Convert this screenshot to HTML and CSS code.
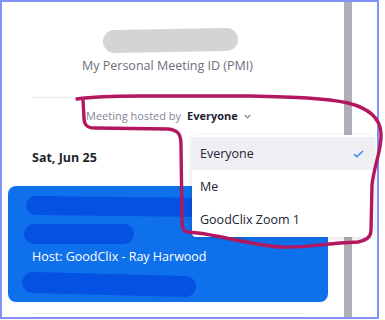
FILE: index.html
```html
<!DOCTYPE html>
<html lang="en">
  <head>
    <meta charset="utf-8" />
    <title>Meetings</title>
    <link rel="stylesheet" href="styles.css">
  </head>
  <body>
    <div id="frame">
      <div id="panel">
        <div class="blob"></div>
        <p class="pmi">My Personal Meeting ID (PMI)</p>
        <hr class="rule" />
        <div class="hosted">
          <span class="hosted-label">Meeting hosted by</span>
          <span class="hosted-value">Everyone</span>
          <svg class="chevron" width="7" height="5" viewBox="0 0 7 5"><polyline points="0.8,1 3.5,3.8 6.2,1" fill="none" stroke="#7b7b8a" stroke-width="1.1" /></svg>
        </div>
        <h3 class="date">Sat, Jun 25</h3>
        <div class="card">
          <div class="scribble s1"></div>
          <div class="scribble s2"></div>
          <div class="host">Host: GoodClix - Ray Harwood</div>
          <div class="scribble s3"></div>
        </div>
        <hr class="rule rule-bottom" />

        <ul class="menu">
          <li class="menu-item selected">Everyone
            <svg class="check" width="11" height="8" viewBox="0 0 11 8"><polyline points="1,4.2 3.8,6.8 10,1" fill="none" stroke="#2d8cff" stroke-width="1.5" /></svg>
          </li>
          <li class="menu-item">Me</li>
          <li class="menu-item">GoodClix Zoom 1</li>
        </ul>
      </div>
      <div id="scrollbar"></div>
    </div>

    <svg id="markup" width="385" height="320" viewBox="0 0 385 320">
      <path d="M77,99 C90,97 110,96 140,96 L250,96 C295,97 325,98 348,103 C368,108 380,117 381,133 C382,150 374,165 372,185 L371,230 C371,237 367,240 358,242 L340,243 C318,245 300,248 280,247 C252,245 222,236 198,233 L187,232 C183,231 182,228 182,222 L181,145 C181,134 178,130 168,129 L95,128 C87,128 84,125 84,118 L83,100"
        fill="none" stroke="#b3175f" stroke-width="3.4" stroke-linecap="round" stroke-linejoin="round" />
    </svg>
  </body>
</html>
```

FILE: styles.css
```css
body {
  margin: 0;
  background: #fff;
  font-family: "Open Sans", "Noto Sans", sans-serif;
}
#frame {
  width: 379px;
  height: 319px;
  box-sizing: border-box;
  border: 2px solid #8191f8;
  display: flex;
  overflow: hidden;
}
#panel {
  position: relative;
  width: 342px;
  flex: none;
}
#scrollbar {
  width: 8px;
  flex: none;
  background: #b0afb7;
}

.blob {
  margin: 27px 0 0 101px;
  width: 135px;
  height: 23px;
  border-radius: 12px;
  background: #d3d4d6;
  transform: rotate(-1deg);
}
.pmi {
  margin: 5px 0 0 80px;
  font-size: 12.5px;
  line-height: 18px;
  color: #6e6e7c;
}
.rule {
  margin: 22px 0 0 30px;
  width: 272px;
  border: none;
  border-top: 1px solid #e9e9ee;
}
.rule-bottom {
  margin-top: 11px;
}
.hosted {
  margin: 11px 0 0 84px;
  font-size: 11px;
  line-height: 14px;
  display: flex;
  align-items: center;
}
.hosted-label {
  color: #868694;
}
.hosted-value {
  margin-left: 6px;
  font-weight: 700;
  color: #232333;
}
.chevron {
  margin-left: 6px;
}
.date {
  margin: 27px 0 0 30px;
  font-size: 12.5px;
  line-height: 16px;
  font-weight: 700;
  color: #1f1f2c;
}

.card {
  margin: 20px 0 0 6px;
  width: 320px;
  height: 116px;
  box-sizing: border-box;
  padding-top: 11px;
  border-radius: 8px;
  background: #0e71eb;
}
.scribble {
  background: #0551e2;
  border-radius: 11px;
}
.s1 {
  margin-left: 18px;
  width: 190px;
  height: 19px;
  transform: rotate(0.6deg);
}
.s2 {
  margin: 8px 0 0 16px;
  width: 110px;
  height: 20px;
}
.host {
  margin: 4px 0 0 24px;
  font-size: 12.5px;
  line-height: 18px;
  color: #fff;
}
.s3 {
  margin: 8px 0 0 14px;
  width: 174px;
  height: 21px;
  transform: rotate(1.5deg);
}

.menu {
  position: absolute;
  left: 190px;
  top: 133px;
  width: 182px;
  margin: 0;
  padding: 2px 0 1px;
  list-style: none;
  background: #fff;
  border-radius: 4px;
  box-shadow: 0 1px 5px rgba(0, 0, 0, 0.14);
}
.menu-item {
  height: 33px;
  display: flex;
  align-items: center;
  justify-content: space-between;
  padding: 0 10px 0 8px;
  font-size: 12.5px;
  color: #232333;
}
.selected {
  background: #efeff3;
}

#markup {
  position: absolute;
  left: 0;
  top: 0;
  pointer-events: none;
}
```
